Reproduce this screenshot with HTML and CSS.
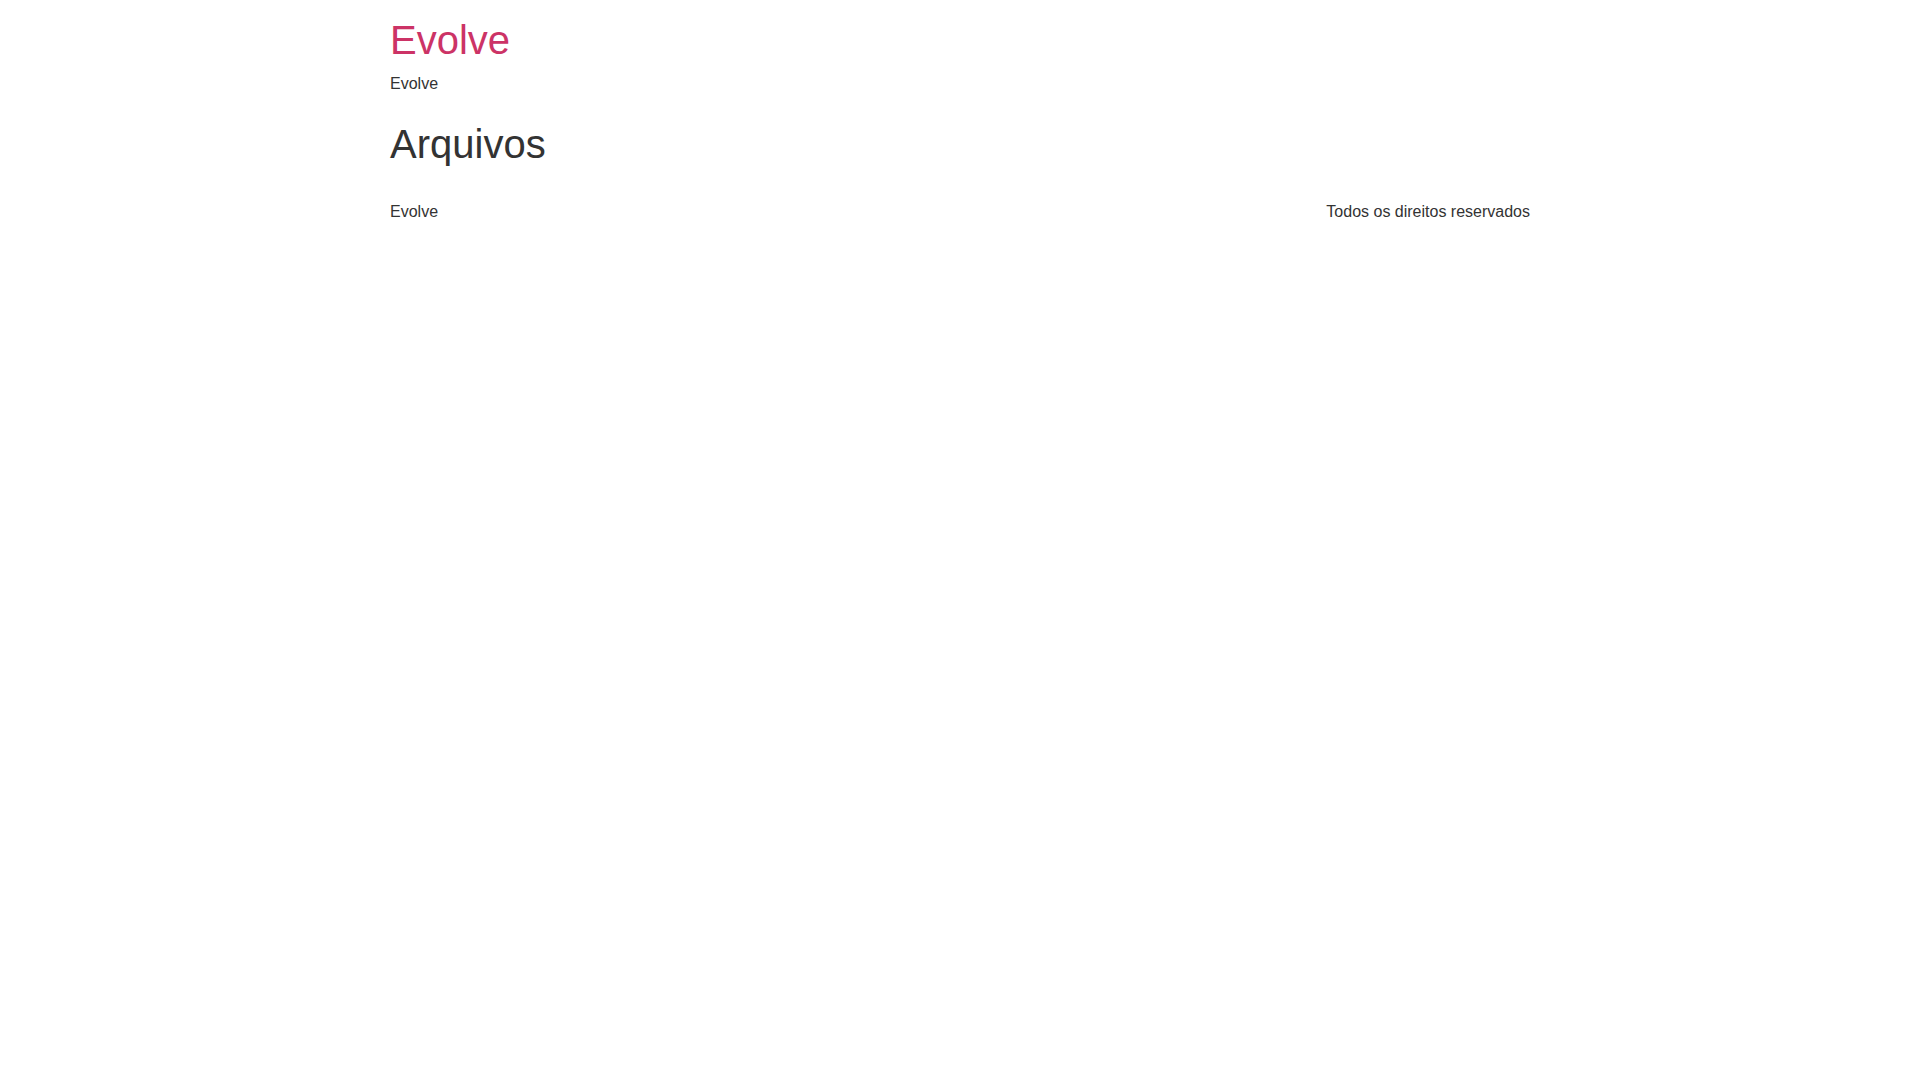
FILE: index.html
```html
<!DOCTYPE html>
<html lang="pt-BR">
<head>
<meta charset="utf-8">
<title>Arquivos - Evolve</title>
<link rel="stylesheet" href="styles.css">
</head>
<body>
<header class="site-header">
  <div class="site-branding">
    <h1 class="site-title"><a href="#">Evolve</a></h1>
    <p class="site-description">Evolve</p>
  </div>
</header>
<main class="site-main">
  <div class="page-header">
    <h1 class="entry-title">Arquivos</h1>
  </div>
</main>
<footer class="site-footer">
  <div class="footer-inner">
    <p class="footer-title">Evolve</p>
    <p class="copyright">Todos os direitos reservados</p>
  </div>
</footer>
</body>
</html>
```
FILE: styles.css
```css
html, body {
  margin: 0;
  padding: 0;
  background: #fff;
}
body {
  font-family: "Liberation Sans", Arial, sans-serif;
  font-size: 16px;
  line-height: 1.5;
  color: #333;
}
.site-header,
.site-main,
.site-footer {
  width: 1140px;
  margin: 0 auto;
}
.site-header {
  padding: 16px 0 16px;
}
.site-title {
  margin: 0;
  font-size: 40px;
  font-weight: 400;
  line-height: 1.2;
}
.site-title a {
  color: #c36;
  text-decoration: none;
}
.site-description {
  margin: 8px 0 0;
}
.entry-title {
  margin: 8px 0 0;
  font-size: 40px;
  font-weight: 400;
  line-height: 1.2;
  color: #333;
}
.site-footer {
  padding-top: 32px;
}
.footer-inner {
  display: flex;
  justify-content: space-between;
  align-items: center;
}
.footer-inner p {
  margin: 0;
}
```
